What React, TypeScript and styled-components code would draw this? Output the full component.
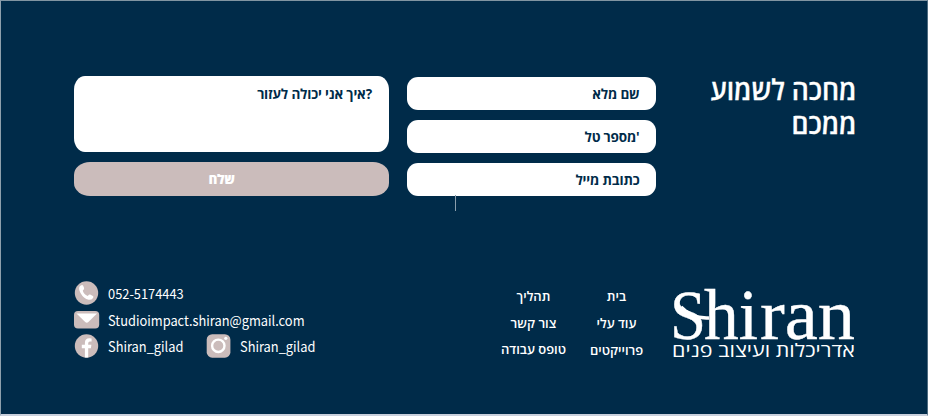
import React from "react";
import styled, { createGlobalStyle } from "styled-components";

const navy = "#002b49";
const blush = "#cbbcbb";
const hebrew = `"Open Sans", "Noto Sans", "DejaVu Sans", sans-serif`;
const latin = `"Noto Sans CJK JP", "Open Sans", sans-serif`;

const Global = createGlobalStyle`
  * { box-sizing: border-box; }
  body { margin: 0; background: ${navy}; }
`;

const Footer = styled.footer`
  width: 928px;
  height: 416px;
  background: ${navy};
  color: #fff;
  font-family: ${hebrew};
  border-top: 1px solid #8195a2;
  border-left: 1px solid #8ea0ac;
  border-right: 1px solid #4d6b80;
  border-bottom: 2px solid #c9d0dc;
  padding: 75px 71px 0 73px;
  overflow: hidden;
`;

const ContactRow = styled.section`
  display: flex;
  align-items: flex-start;
  height: 204px;
`;

const MessageColumn = styled.div`
  width: 315px;
  display: flex;
  flex-direction: column;
  gap: 10px;
`;

const MessageBox = styled.div`
  height: 76px;
  border-radius: 11px / 14px;
  background: #fff;
  color: ${navy};
  padding: 8px 17px;
  text-align: right;
  font-size: 13.5px;
  line-height: 20px;
  font-weight: 700;
  letter-spacing: -0.17px;
`;

const SendButton = styled.button`
  height: 34px;
  border: 0;
  border-radius: 16px / 13px;
  background: ${blush};
  color: #fff;
  font: 800 13.5px/20px ${hebrew};
  letter-spacing: -0.4px;
  padding: 0 20px 0 0;
`;

const Fields = styled.div`
  position: relative;
  width: 249px;
  margin: 1px 0 0 17.5px;
  display: flex;
  flex-direction: column;
  gap: 10px;
`;

const Field = styled.div`
  height: 33px;
  border-radius: 11px;
  background: #fff;
  color: ${navy};
  padding: 1px 16px 0;
  display: flex;
  align-items: center;
  justify-content: flex-end;
  font-size: 13.5px;
  line-height: 20px;
  font-weight: 700;
  letter-spacing: -0.17px;
`;

const Tick = styled.i`
  position: absolute;
  left: 48.5px;
  top: 118px;
  width: 1px;
  height: 16px;
  background: #8a9eac;
`;

const Heading = styled.h2`
  flex: 1;
  margin: -4px 0 0 0;
  text-align: right;
  font-size: 28px;
  line-height: 34px;
  font-weight: 600;
  -webkit-text-stroke: 0.3px #fff;
  white-space: nowrap;
  transform: scaleX(0.947);
  transform-origin: right;
`;

const InfoRow = styled.section`
  display: flex;
  align-items: flex-start;
`;

const Contacts = styled.div`
  width: 316px;
  display: grid;
  grid-template-rows: 26.5px 26.5px 26.5px;
`;

const ContactLine = styled.div`
  display: flex;
  align-items: center;
  font-family: ${latin};
  font-size: 14px;
  line-height: 20px;
`;

const Contact = styled.div<{ $w?: number }>`
  display: flex;
  align-items: center;
  gap: 7.5px;
  width: ${(p) => (p.$w ? `${p.$w}px` : "auto")};
  white-space: nowrap;
  svg { flex: none; }
`;

const ContactText = styled.span`
  transform: scaleX(0.917);
  transform-origin: left;
`;

const Nav = styled.nav`
  width: 170px;
  margin: 3px 0 0 99.5px;
  display: grid;
  grid-template-columns: 88px 78px;
  grid-template-rows: 26.5px 26.5px 26.5px;
  justify-items: center;
  align-items: center;
`;

const NavLink = styled.a<{ $drop?: boolean }>`
  color: #fff;
  font-size: 13px;
  line-height: 20px;
  font-weight: 600;
  white-space: nowrap;
  padding-top: ${(p) => (p.$drop ? 1 : 0)}px;
`;

const Logo = styled.svg`
  display: block;
  margin: 0 0 0 9.5px;
  overflow: visible;
`;

const PhoneIcon = () => (
  <svg width="26" height="26" viewBox="0 0 26 26">
    <circle cx="12.500" cy="13" r="11.700" fill={blush} />
    <path d="M5.600 6.400q1.300-1.600 2.600-1.500 1 .1 1.900 3.100.4 1.400-1.300 2.600.7 3.600 5 5.400 1.200-1.700 2.400-1.400l2.700 1.500q1 .8.200 1.800-1.700 2.300-4.500 1.900Q9.600 18.700 6.500 13 4.300 8.800 5.600 6.400Z" fill="#fff" />
  </svg>
);

const MailIcon = () => (
  <svg width="26" height="20" viewBox="0 0 26 20">
    <rect x="0" y="1" width="25.200" height="17.500" rx="4" fill={blush} />
    <path d="M2.500 3.500h20.500l-8.600 8.600q-1.600 1.300-3.200 0Z" fill="#fff" />
  </svg>
);

const FacebookIcon = () => (
  <svg width="26" height="26" viewBox="0 0 26 26">
    <circle cx="12.500" cy="13" r="11.700" fill={blush} />
    <path d="M10.900 24.500V15.300H7.800v-3.500h3.100V9.700q0-4.500 4.500-4.500l2.200.2v3.100h-1.700q-1.700 0-1.700 1.700v1.600h3.200l-.5 3.500h-2.700v9.200Z" fill="#fff" />
  </svg>
);

const InstagramIcon = () => (
  <svg width="26" height="26" viewBox="0 0 26 26">
    <rect x=".7" y="1.200" width="23.700" height="23.500" rx="5.500" fill={blush} />
    <circle cx="12.300" cy="12.800" r="6.200" fill="none" stroke="#fff" strokeWidth="2.400" />
    <circle cx="19.800" cy="5.300" r="1.600" fill="#fff" />
  </svg>
);

export default function App() {
  return (
    <>
      <Global />
      <Footer>
        <ContactRow>
          <MessageColumn>
            <MessageBox>איך אני יכולה לעזור?</MessageBox>
            <SendButton>שלח</SendButton>
          </MessageColumn>
          <Fields>
            <Field>שם מלא</Field>
            <Field>מספר טל'</Field>
            <Field>כתובת מייל</Field>
            <Tick />
          </Fields>
          <Heading>מחכה לשמוע<br />ממכם</Heading>
        </ContactRow>
        <InfoRow>
          <Contacts>
            <ContactLine><Contact><PhoneIcon /><ContactText>052-5174443</ContactText></Contact></ContactLine>
            <ContactLine><Contact><MailIcon /><ContactText>Studioimpact.shiran@gmail.com</ContactText></Contact></ContactLine>
            <ContactLine>
              <Contact $w={132}><FacebookIcon /><ContactText>Shiran_gilad</ContactText></Contact>
              <Contact><InstagramIcon /><ContactText>Shiran_gilad</ContactText></Contact>
            </ContactLine>
          </Contacts>
          <Nav>
            <NavLink>תהליך</NavLink>
            <NavLink>בית</NavLink>
            <NavLink>צור קשר</NavLink>
            <NavLink $drop>עוד עלי</NavLink>
            <NavLink>טופס עבודה</NavLink>
            <NavLink $drop>פרוייקטים</NavLink>
          </Nav>
          <Logo width="186" height="80" viewBox="0 0 186 80">
            <g fill="#fff">
              <text y="58.500" fontFamily='"Liberation Serif", serif' fontSize="72" stroke="#fff" strokeWidth=".4">
                <tspan x="1" fontSize="69" textLength="36" lengthAdjust="spacingAndGlyphs">S</tspan>
                <tspan x="35" textLength="54" lengthAdjust="spacingAndGlyphs">hi</tspan>
                <tspan x="91" textLength="95" lengthAdjust="spacingAndGlyphs">ran</tspan>
              </text>
              <path d="M12 27Q23 39 40 38" fill="none" stroke="#fff" strokeWidth="3.500" />
              <text x="3" y="77" fontFamily={hebrew} fontSize="18" textLength="183" lengthAdjust="spacingAndGlyphs">אדריכלות ועיצוב פנים</text>
            </g>
          </Logo>
        </InfoRow>
      </Footer>
    </>
  );
}
